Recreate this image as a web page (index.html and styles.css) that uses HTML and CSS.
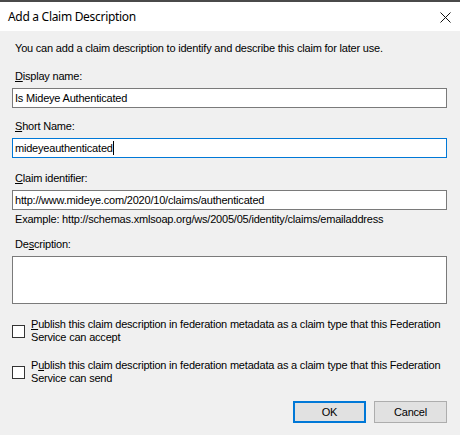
FILE: index.html
```html
<!DOCTYPE html>
<html lang="en">
<head>
<meta charset="UTF-8">
<title>Add a Claim Description</title>
<link rel="stylesheet" href="styles.css">
</head>
<body>
<div class="dialog">
    <div class="titlebar">
        <span class="title">Add a Claim Description</span>
        <svg class="close" width="11" height="11" viewBox="0 0 11 11">
            <path d="M0.5 0.5 L10.5 10.5 M10.5 0.5 L0.5 10.5" stroke="#111" stroke-width="1" fill="none"/>
        </svg>
    </div>
    <div class="content">
        <p class="intro">You can add a claim description to identify and describe this claim for later use.</p>

        <div class="label label-first"><u>D</u>isplay name:</div>
        <div class="field">Is Mideye Authenticated</div>

        <div class="label"><u>S</u>hort Name:</div>
        <div class="field field-focus">mideyeauthenticated<span class="caret"></span></div>

        <div class="label label-claim"><u>C</u>laim identifier:</div>
        <div class="field">http://www.mideye.com/2020/10/claims/authenticated</div>
        <div class="example">Example: http://schemas.xmlsoap.org/ws/2005/05/identity/claims/emailaddress</div>

        <div class="label label-desc">De<u>s</u>cription:</div>
        <div class="field field-multi"></div>

        <div class="check-row check-first">
            <span class="checkbox"></span>
            <span class="check-text"><u>P</u>ublish this claim description in federation metadata as a claim type that this Federation Service can accept</span>
        </div>
        <div class="check-row">
            <span class="checkbox"></span>
            <span class="check-text">P<u>u</u>blish this claim description in federation metadata as a claim type that this Federation Service can send</span>
        </div>

        <div class="buttons">
            <button class="btn btn-default">OK</button>
            <button class="btn">Cancel</button>
        </div>
    </div>
</div>
</body>
</html>
```

FILE: styles.css
```css
body {
    margin: 0;
    padding: 0;
    background-color: #f0f0f0;
}
.dialog {
    width: 460px;
    height: 435px;
    border-top: 2px solid #4a4a4a;
    box-sizing: border-box;
    background-color: #f0f0f0;
    font-family: "Liberation Sans", Arial, sans-serif;
    font-size: 11px;
    line-height: 13px;
    letter-spacing: -0.2px;
    color: #000;
}
.titlebar {
    height: 29px;
    background-color: #fff;
    display: flex;
    align-items: center;
    justify-content: space-between;
    padding: 0 9px 0 8px;
}
.title {
    font-family: "Noto Sans", sans-serif;
    font-size: 12px;
    letter-spacing: -0.3px;
    color: #000;
}
.close {
    display: block;
    margin-top: 1px;
}
.content {
    padding: 11px 13px 0 12px;
}
.intro {
    margin: 0 0 0 3px;
}
.label {
    margin: 12px 0 5px 3px;
}
.label-first {
    margin-top: 15px;
}
.label-claim {
    margin-top: 14px;
}
.label-desc {
    margin-top: 12px;
}
.field {
    height: 20px;
    box-sizing: border-box;
    border: 1px solid #7a7a7a;
    background-color: #fff;
    padding: 0 2px;
    line-height: 18px;
    white-space: nowrap;
}
.field-focus {
    border-color: #0078d7;
}
.caret {
    display: inline-block;
    width: 1px;
    height: 14px;
    background-color: #000;
    vertical-align: -3px;
}
.field-multi {
    height: 48px;
}
.example {
    margin: 3px 0 0 3px;
}
.check-row {
    display: flex;
    align-items: flex-start;
    gap: 6px;
    margin-top: 15px;
}
.check-first {
    margin-top: 14px;
}
.checkbox {
    flex: none;
    width: 13px;
    height: 13px;
    box-sizing: border-box;
    border: 1px solid #333;
    background-color: #fff;
    margin-top: 7px;
}
.check-text {
    flex: 1;
}
.buttons {
    display: flex;
    justify-content: flex-end;
    gap: 8px;
    margin-top: 16px;
}
.btn {
    width: 73px;
    height: 22px;
    box-sizing: border-box;
    border: 1px solid #adadad;
    background-color: #e1e1e1;
    font-family: "Liberation Sans", Arial, sans-serif;
    font-size: 11px;
    letter-spacing: -0.2px;
    color: #000;
    padding: 0;
}
.btn-default {
    border: 2px solid #0078d7;
}
```
